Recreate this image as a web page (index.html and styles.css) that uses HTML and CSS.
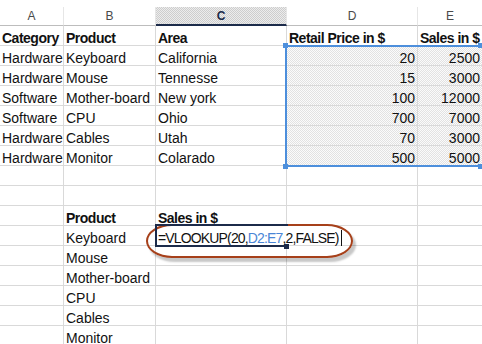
FILE: index.html
```html
<!DOCTYPE html>
<html lang="en">
<head>
    <meta charset="UTF-8">
    <title>VLOOKUP example</title>
    <link rel="stylesheet" href="styles.css">
</head>
<body>
    <div class="sheet">

        <div class="row head">
            <div class="hcell">A</div>
            <div class="hcell">B</div>
            <div class="hcell current">C</div>
            <div class="hcell">D</div>
            <div class="hcell">E</div>
        </div>

        <div class="row">
            <div class="cell b">Category</div>
            <div class="cell b">Product</div>
            <div class="cell b">Area</div>
            <div class="cell b">Retail Price in $</div>
            <div class="cell b">Sales in $</div>
        </div>
        <div class="row">
            <div class="cell">Hardware</div>
            <div class="cell">Keyboard</div>
            <div class="cell">California</div>
            <div class="cell num ref">20</div>
            <div class="cell num ref">2500</div>
        </div>
        <div class="row">
            <div class="cell">Hardware</div>
            <div class="cell">Mouse</div>
            <div class="cell">Tennesse</div>
            <div class="cell num ref">15</div>
            <div class="cell num ref">3000</div>
        </div>
        <div class="row">
            <div class="cell">Software</div>
            <div class="cell">Mother-board</div>
            <div class="cell">New york</div>
            <div class="cell num ref">100</div>
            <div class="cell num ref">12000</div>
        </div>
        <div class="row">
            <div class="cell">Software</div>
            <div class="cell">CPU</div>
            <div class="cell">Ohio</div>
            <div class="cell num ref">700</div>
            <div class="cell num ref">7000</div>
        </div>
        <div class="row">
            <div class="cell">Hardware</div>
            <div class="cell">Cables</div>
            <div class="cell">Utah</div>
            <div class="cell num ref">70</div>
            <div class="cell num ref">3000</div>
        </div>
        <div class="row">
            <div class="cell">Hardware</div>
            <div class="cell">Monitor</div>
            <div class="cell">Colarado</div>
            <div class="cell num ref">500</div>
            <div class="cell num ref">5000</div>
        </div>
        <div class="row">
            <div class="cell"></div><div class="cell"></div><div class="cell"></div><div class="cell"></div><div class="cell"></div>
        </div>
        <div class="row">
            <div class="cell"></div><div class="cell"></div><div class="cell"></div><div class="cell"></div><div class="cell"></div>
        </div>
        <div class="row">
            <div class="cell"></div>
            <div class="cell b">Product</div>
            <div class="cell b">Sales in $</div>
            <div class="cell"></div>
            <div class="cell"></div>
        </div>
        <div class="row">
            <div class="cell"></div>
            <div class="cell">Keyboard</div>
            <div class="cell active">=VLOOKUP(20,<span class="range">D2:E7</span>,2,FALSE)<span class="caret"></span></div>
            <div class="cell"></div>
            <div class="cell"></div>
        </div>
        <div class="row">
            <div class="cell"></div>
            <div class="cell">Mouse</div>
            <div class="cell"></div><div class="cell"></div><div class="cell"></div>
        </div>
        <div class="row">
            <div class="cell"></div>
            <div class="cell">Mother-board</div>
            <div class="cell"></div><div class="cell"></div><div class="cell"></div>
        </div>
        <div class="row">
            <div class="cell"></div>
            <div class="cell">CPU</div>
            <div class="cell"></div><div class="cell"></div><div class="cell"></div>
        </div>
        <div class="row">
            <div class="cell"></div>
            <div class="cell">Cables</div>
            <div class="cell"></div><div class="cell"></div><div class="cell"></div>
        </div>
        <div class="row">
            <div class="cell"></div>
            <div class="cell">Monitor</div>
            <div class="cell"></div><div class="cell"></div><div class="cell"></div>
        </div>

        <!-- overlays -->
        <div class="ref-box">
            <span class="knob tl"></span>
            <span class="knob tr"></span>
            <span class="knob bl"></span>
            <span class="knob br"></span>
        </div>
        <div class="callout"></div>
        <span class="fill-handle"></span>
    </div>
</body>
</html>
```

FILE: styles.css
```css
*{
    box-sizing: border-box;
}
body{
    margin: 0;
    padding: 0;
    background: #fff;
    color: #111;
    font-family: "Liberation Sans", Arial, sans-serif;
    font-size: 14px;
    overflow: hidden;
}
.sheet{
    position: relative;
    width: 482px;
    height: 344px;
    overflow: hidden;
}
.row{
    display: grid;
    grid-template-columns: 64px 92px 131px 131px 65px;
    height: 20px;
}
.cell{
    height: 20px;
    padding: 3px 2px 0;
    line-height: 18px;
    white-space: nowrap;
    border-right: 1px solid #d9d9d9;
    border-bottom: 1px solid #d9d9d9;
}
.cell.b{
    font-weight: bold;
    letter-spacing: -0.5px;
}
.cell.num{
    text-align: right;
}
.cell.ref{
    background: repeating-conic-gradient(#e2e2e2 0 25%, #fbfbfb 0 50%) 0 0 / 2px 2px;
}

/* column letters */
.row.head{
    height: 26px;
    padding-top: 7px;
}
.hcell{
    height: 19px;
    line-height: 18px;
    text-align: center;
    font-size: 12px;
    color: #4a4a4a;
    border-right: 1px solid #e6e6e6;
    border-bottom: 1px solid #bdbdbd;
}
.hcell.current{
    font-weight: bold;
    color: #1c2b4a;
    border-bottom: 2px solid #1c2b4a;
    background: repeating-conic-gradient(#cdcdcd 0 25%, #ececec 0 50%) 0 0 / 2px 2px;
}

/* cell being edited */
.cell.active{
    position: relative;
    border-right-color: transparent;
    letter-spacing: -0.85px;
}
.cell.active::after{
    content: "";
    position: absolute;
    top: -2px;
    left: -1px;
    right: -2px;
    bottom: -2px;
    border: 2px solid #1c2b4a;
    border-right: none;
    z-index: 3;
}
.range{
    color: #4a86d6;
}
.caret{
    display: inline-block;
    width: 1px;
    height: 16px;
    margin-left: 2px;
    vertical-align: -3px;
    background: #111;
}

/* D2:E7 reference outline */
.ref-box{
    position: absolute;
    left: 285px;
    top: 45px;
    width: 200px;
    height: 122px;
    border: 2px solid #4d8fdc;
}
.knob{
    position: absolute;
    width: 5px;
    height: 5px;
    background: #4d8fdc;
}
.knob.tl{ left: -4px; top: -4px; }
.knob.tr{ left: 191px; top: -4px; }
.knob.bl{ left: -4px; bottom: -4px; }
.knob.br{ left: 191px; bottom: -4px; }

/* red callout round the formula */
.callout{
    position: absolute;
    left: 146px;
    top: 224px;
    width: 207px;
    height: 34px;
    border: 2px solid #a6401a;
    border-radius: 26px / 17px;
    box-shadow: 3px 4px 2px rgba(0, 0, 0, 0.22);
    z-index: 2;
}
.fill-handle{
    position: absolute;
    left: 284px;
    top: 244px;
    width: 5px;
    height: 5px;
    background: #1c2b4a;
    z-index: 4;
}
```
